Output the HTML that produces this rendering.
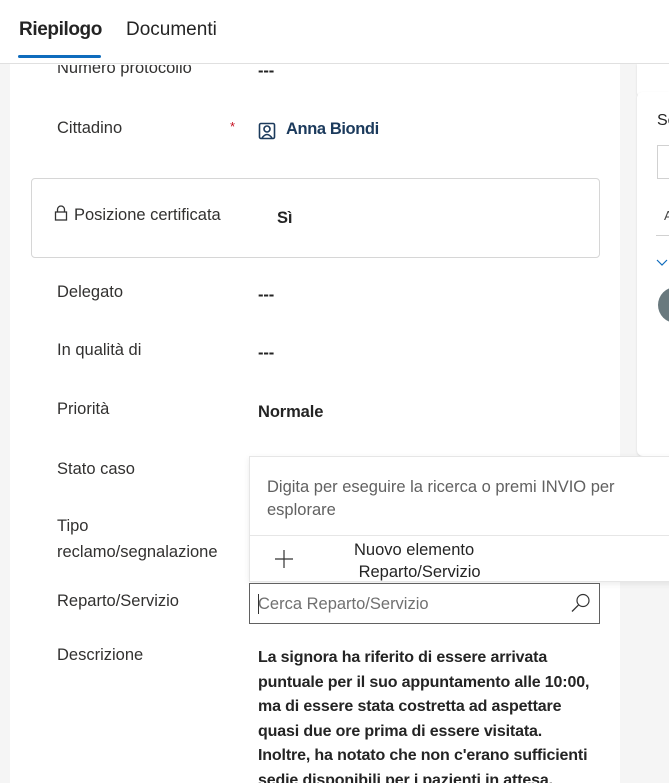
<!DOCTYPE html>
<html><head><meta charset="utf-8"><style>
*{margin:0;padding:0;box-sizing:border-box}
html,body{width:669px;height:783px;overflow:hidden}
body{background:#f5f5f5;font-family:"Liberation Sans",sans-serif;color:#242424;position:relative}
.a{position:absolute;white-space:nowrap}
.lbl{font-size:16.5px;color:#323130;letter-spacing:0}
.val{font-size:16.5px;font-weight:bold;color:#242424;letter-spacing:-0.1px}
</style></head><body>
<div class="a" style="left:10px;top:64px;width:610px;height:719px;background:#fff"></div>
<div class="a" style="left:637px;top:64px;width:32px;height:34px;background:#fff;border-radius:0 0 0 6px;box-shadow:0 1px 2px rgba(0,0,0,.12)"></div>
<div class="a" style="left:637px;top:92px;width:32px;height:364px;background:#fff;border-radius:6px 0 0 6px;box-shadow:0 1px 2px rgba(0,0,0,.12)"></div>
<div class="a" style="left:657px;top:112px;font-size:16px">Se</div>
<div class="a" style="left:657px;top:145px;width:14px;height:34px;border:1px solid #d1d1d1"></div>
<div class="a" style="left:664px;top:208px;font-size:13px;color:#444">A</div>
<div class="a" style="left:656px;top:235px;width:13px;height:1px;background:#d1d1d1"></div>
<svg class="a" style="left:656px;top:258px" width="13" height="10"><path d="M1 2 L6 7 L11 2" stroke="#0f6cbd" fill="none" stroke-width="1.2"/></svg>
<div class="a" style="left:658px;top:287px;width:36px;height:36px;border-radius:50%;background:#69797e"></div>

<div class="a" style="left:0;top:0;width:669px;height:64px;background:#fff;border-bottom:1px solid #e0e0e0"></div>
<div class="a" style="left:19px;top:19px;font-size:19px;font-weight:bold;letter-spacing:-0.4px">Riepilogo</div>
<div class="a" style="left:126px;top:19px;font-size:19px;letter-spacing:0">Documenti</div>
<div class="a" style="left:18px;top:55px;width:83px;height:3px;background:#0f6cbd;border-radius:2px"></div>

<div class="a lbl" style="left:57px;top:59px;clip-path:inset(6px 0 0 0)">Numero protocollo</div>
<div class="a val" style="left:258px;top:62px">---</div>
<div class="a lbl" style="left:57px;top:119px">Cittadino</div>
<div class="a" style="left:230px;top:119px;color:#c50f1f;font-size:13px">*</div>
<svg class="a" style="left:258px;top:122px" width="18" height="18" viewBox="0 0 18 18"><rect x="1.5" y="1.5" width="15" height="15" rx="1.5" fill="none" stroke="#1b3a5c" stroke-width="1.6"/><circle cx="9" cy="7" r="3" fill="none" stroke="#1b3a5c" stroke-width="1.6"/><path d="M4 16 Q9 9 14 16" fill="none" stroke="#1b3a5c" stroke-width="1.6"/></svg>
<div class="a" style="left:286px;top:120px;font-size:16.5px;color:#1b3a5c;font-weight:bold;letter-spacing:-0.4px">Anna Biondi</div>

<div class="a" style="left:31px;top:178px;width:569px;height:80px;border:1px solid #d6d6d6;border-radius:4px"></div>
<svg class="a" style="left:54px;top:205px" width="14" height="16" viewBox="0 0 14 16"><path d="M3.5 7 V4.5 a3.5 3.5 0 0 1 7 0 V7" fill="none" stroke="#333" stroke-width="1.3"/><rect x="1.5" y="7" width="11" height="8" fill="none" stroke="#333" stroke-width="1.3"/></svg>
<div class="a lbl" style="left:74px;top:206px">Posizione certificata</div>
<div class="a val" style="left:277px;top:209px">Sì</div>

<div class="a lbl" style="left:57px;top:283px">Delegato</div>
<div class="a val" style="left:258px;top:286px">---</div>
<div class="a lbl" style="left:57px;top:341px">In qualità di</div>
<div class="a val" style="left:258px;top:344px">---</div>
<div class="a lbl" style="left:57px;top:400px">Priorità</div>
<div class="a val" style="left:258px;top:403px">Normale</div>
<div class="a lbl" style="left:57px;top:460px">Stato caso</div>
<div class="a lbl" style="left:57px;top:513px;line-height:26px">Tipo<br>reclamo/segnalazione</div>
<div class="a lbl" style="left:57px;top:592px">Reparto/Servizio</div>
<div class="a lbl" style="left:57px;top:646px">Descrizione</div>
<div class="a val" style="left:258px;top:646px;line-height:24.6px;font-size:16px;letter-spacing:-0.15px">La signora ha riferito di essere arrivata<br>puntuale per il suo appuntamento alle 10:00,<br>ma di essere stata costretta ad aspettare<br>quasi due ore prima di essere visitata.<br>Inoltre, ha notato che non c'erano sufficienti<br>sedie disponibili per i pazienti in attesa.</div>

<div class="a" style="left:249px;top:456px;width:430px;height:126px;background:#fff;border:1px solid #e6e6e6;box-shadow:0 2px 6px rgba(0,0,0,.08)"></div>
<div class="a" style="left:249px;top:535px;width:430px;height:1px;background:#e6e6e6"></div>
<div class="a" style="left:267px;top:476px;font-size:16.5px;color:#616161;line-height:23px">Digita per eseguire la ricerca o premi INVIO per<br>esplorare</div>
<svg class="a" style="left:274px;top:549px" width="20" height="20"><path d="M10 1 V19 M1 10 H19" stroke="#333" stroke-width="1.2"/></svg>
<div class="a" style="left:354px;top:539px;font-size:16.5px;color:#242424;line-height:22px">Nuovo elemento<br>&nbsp;Reparto/Servizio</div>
<div class="a" style="left:249px;top:583px;width:351px;height:41px;background:#fff;border:1px solid #616161"></div>
<div class="a" style="left:258px;top:595px;font-size:16.5px;color:#707070">Cerca Reparto/Servizio</div>
<div class="a" style="left:258px;top:594px;width:1px;height:20px;background:#333"></div>
<svg class="a" style="left:570px;top:593px" width="22" height="20" viewBox="0 0 22 20"><circle cx="13" cy="7.5" r="6" fill="none" stroke="#333" stroke-width="1.2"/><path d="M8.8 11.7 L2 18.5" stroke="#333" stroke-width="1.3"/></svg>
</body></html>
